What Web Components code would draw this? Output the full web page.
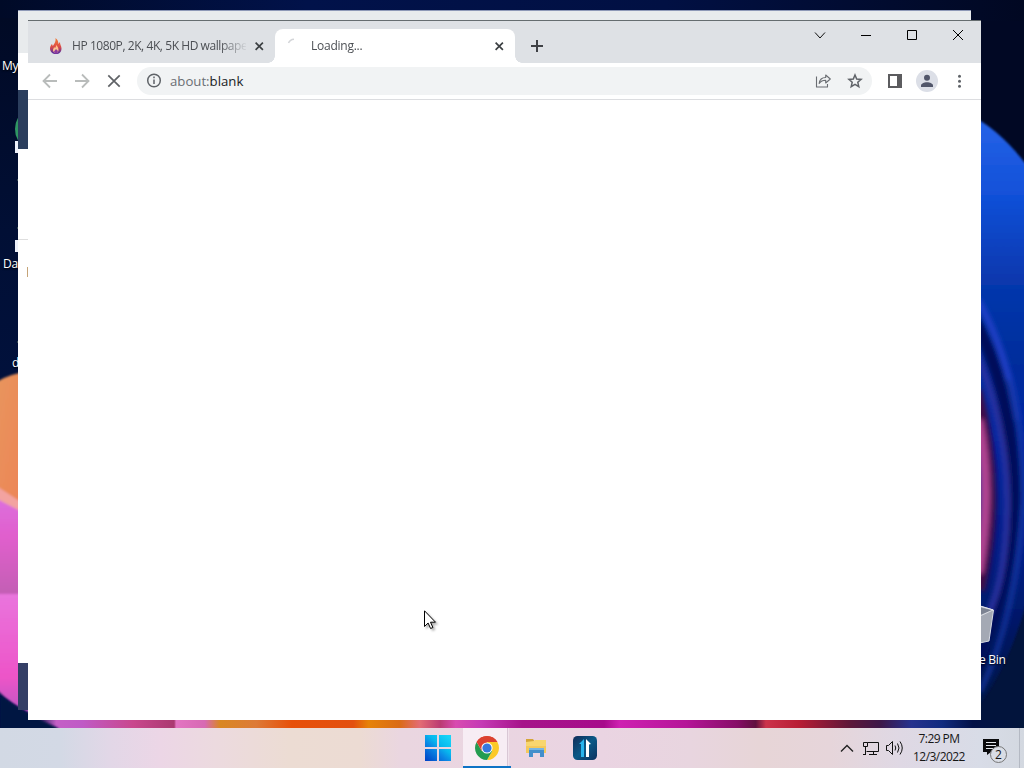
<!DOCTYPE html>
<html lang="en">
<head>
<meta charset="utf-8">
<title>Desktop</title>
<style>
  html, body {
    margin: 0;
    width: 1024px;
    height: 768px;
    overflow: hidden;
  }
  body {
    font-family: "Open Sans", "Noto Sans", sans-serif;
    font-size: 12px;
  }
</style>
</head>
<body>
<my-desktop>
  <desktop-label style="left: 2px; top: 58px">My</desktop-label>
  <desktop-label style="left: 3px; top: 256px">Dat</desktop-label>
  <desktop-label style="left: 12px; top: 355px">d</desktop-label>
  <desktop-label style="left: 979px; top: 652px">e Bin</desktop-label>
  <back-window></back-window>
  <browser-window>
    <browser-tab slot="tabs" id="wall">
      <svg slot="icon" width="16" height="16" viewBox="0 0 16 16">
        <defs><linearGradient id="f" x1="0" y1="0" x2="0" y2="1"><stop offset=".1" stop-color="#ee7638"/><stop offset=".55" stop-color="#dd4b45"/><stop offset=".9" stop-color="#64309a"/></linearGradient></defs>
        <path fill="url(#f)" d="M8.500 0c2.500 2 3 4 2.800 6l1.700-2c-.2 2.500 1.500 4 1.500 6.500 0 3.500-2 5.500-5.500 5.500s-6-2-6-5.500c0-2 1-3.500 2-4.500l.8 2c2-2.500 3.200-5 2.700-8z"/>
        <path fill="#ffc18d" d="M9 7c2 2 2.500 3 2.500 5s-1 3-2.500 3-3-1-3-3c0-1 1-2 1-3l1 1c1-1 1-2 1-3z"/>
        <path fill="#8b3aa0" d="M9 11l2 2-1 2.500H8l-1-2z"/>
      </svg>
      HP 1080P, 2K, 4K, 5K HD wallpapers
    </browser-tab>
    <browser-tab slot="tabs" active>
      <svg slot="icon" width="16" height="16" viewBox="0 0 16 16" fill="none" stroke="#d3d5d8" stroke-width="1.500"><path d="M1.500 5Q3 1.500 7 1.300"/></svg>
      Loading...
    </browser-tab>
    <browser-toolbar slot="toolbar"></browser-toolbar>
  </browser-window>
  <mouse-pointer></mouse-pointer>
  <task-bar slot="taskbar">
    <task-button>
      <svg width="26" height="26" viewBox="0 0 26 26">
        <defs><linearGradient id="w" gradientUnits="userSpaceOnUse" x1="0" y1="26" x2="22" y2="0"><stop offset="0" stop-color="#003fc4"/><stop offset=".45" stop-color="#0b8ae6"/><stop offset=".65" stop-color="#07b8ee"/><stop offset="1" stop-color="#18d4f7"/></linearGradient></defs>
        <path fill="url(#w)" d="M0 0h12v12H0zM14 0h12v12H14zM0 14h12v12H0zM14 14h12v12H14z"/>
      </svg>
    </task-button>
    <task-button active>
      <svg width="24" height="24" viewBox="0 0 24 24">
        <path fill="#dc4130" d="M12 12L1.610 6A12 12 0 0 1 22.390 6z"/>
        <path fill="#fbc929" d="M12 12V6h10.390A12 12 0 0 1 12 24l5.200-9z"/>
        <path fill="#249c50" d="M12 12l5.200 3L12 24A12 12 0 0 1 1.610 6l5.200 9z"/>
        <path fill="#dc4130" d="M12 6h10.390A12 12 0 0 0 1.610 6L6.800 15z"/>
        <circle cx="12" cy="12" r="5.600" fill="#fff"/><circle cx="12" cy="12" r="4.600" fill="#3778dc"/>
      </svg>
    </task-button>
    <task-button>
      <svg width="22" height="20" viewBox="0 0 22 20">
        <path fill="#d5a637" d="M1 1h7l2 3H1z"/><path fill="#f8d66f" d="M1 4l8-1 1-1h11v13H1z"/>
        <path fill="#f4c95c" d="M1 8h20v7H1z"/><path fill="#438fcb" d="M4 10h15v9h-4v-4H8v4H4z"/><path fill="#77b6e4" d="M4 10h15v2H4z"/>
      </svg>
    </task-button>
    <task-button>
      <svg width="24" height="24" viewBox="0 0 24 24">
        <defs><linearGradient id="t" x1="0" y1="0" x2="1" y2="1"><stop offset="0" stop-color="#102c58"/><stop offset=".5" stop-color="#0a5886"/><stop offset="1" stop-color="#0b315f"/></linearGradient></defs>
        <rect width="24" height="24" rx="4.500" fill="url(#t)"/>
        <path fill="#28b4ed" d="M6 8l5-5v18H8V8z"/><path fill="#fff" d="M13 3l5 5-2 .5V21h-3z"/>
      </svg>
    </task-button>
    <system-tray slot="tray"></system-tray>
  </task-bar>
</my-desktop>

<script>
/**
 * Attaches an open shadow root with the given markup.
 *
 * @param {HTMLElement} host - The element.
 * @param {string} html - Markup and styles.
 * @returns {ShadowRoot} The shadow root.
 */
const render = (host, html) => {
  const template = document.createElement('template')
  template.innerHTML = html
  const root = host.attachShadow({ mode: 'open' })
  root.appendChild(template.content.cloneNode(true))
  return root
}

/**
 * The wallpaper, the free area for the windows and the taskbar below.
 */
customElements.define('my-desktop', class extends HTMLElement {
  constructor () {
    super()
    render(this, `
<style>
  :host { display: flex; flex-direction: column; position: relative; width: 1024px; height: 768px; overflow: hidden; background: #010b29; }
  #wall { position: absolute; left: 0; top: 0; }
  #area { position: relative; flex: 1; overflow: hidden; }
</style>
<div id="area">
  <svg id="wall" width="1024" height="728" viewBox="0 0 1024 728">
    <defs>
      <filter id="b1" x="-20%" y="-20%" width="140%" height="140%"><feGaussianBlur stdDeviation="1"/></filter>
      <filter id="b2" x="-60%" y="-20%" width="220%" height="140%"><feGaussianBlur stdDeviation="2.500"/></filter>
      <linearGradient id="top" x1="0" x2="1"><stop offset="0" stop-color="#000a27"/><stop offset=".3" stop-color="#01124a"/><stop offset=".65" stop-color="#011043"/><stop offset="1" stop-color="#010822"/></linearGradient>
      <linearGradient id="left" x1="0" x2="0" y1="0" y2="1"><stop offset="0" stop-color="#010a25"/><stop offset=".3" stop-color="#010f35"/><stop offset="1" stop-color="#01154b"/></linearGradient>
      <linearGradient id="blue" x1="0" x2="0" y1="0" y2="1"><stop offset="0" stop-color="#2764e8"/><stop offset=".14" stop-color="#1150d8"/><stop offset=".28" stop-color="#0738ae"/><stop offset=".42" stop-color="#042d9c"/><stop offset=".55" stop-color="#0325a1"/><stop offset=".75" stop-color="#011d83"/><stop offset="1" stop-color="#021446"/></linearGradient>
      <linearGradient id="or" x1="0" x2="1" y1="0" y2="1"><stop offset="0" stop-color="#e8965c"/><stop offset="1" stop-color="#ee8057"/></linearGradient>
      <linearGradient id="pk" x1="0" x2="0" y1="0" y2="1"><stop offset="0" stop-color="#dc70dd"/><stop offset=".4" stop-color="#e15fcd"/><stop offset=".98" stop-color="#c45fb5"/></linearGradient>
      <linearGradient id="pk2" x1="0" x2="0" y1="0" y2="1"><stop offset="0" stop-color="#e975dd"/><stop offset=".7" stop-color="#ed54c8"/><stop offset="1" stop-color="#bd58c3"/></linearGradient>
      <linearGradient id="strip" gradientUnits="userSpaceOnUse" x1="0" x2="1024" y1="0" y2="0">
        <stop offset="0" stop-color="#021243"/><stop offset=".035" stop-color="#021243"/><stop offset=".055" stop-color="#c45fc6"/><stop offset=".08" stop-color="#bf5bc6"/><stop offset=".13" stop-color="#c9478d"/><stop offset=".17" stop-color="#aa3970"/><stop offset=".172" stop-color="#e374c2"/><stop offset=".2" stop-color="#d76ab3"/><stop offset=".215" stop-color="#d98722"/><stop offset=".25" stop-color="#dd7a37"/><stop offset=".285" stop-color="#e75009"/><stop offset=".345" stop-color="#e35010"/><stop offset=".36" stop-color="#e68208"/><stop offset=".39" stop-color="#da6b15"/><stop offset=".41" stop-color="#e36c75"/><stop offset=".43" stop-color="#bb3b72"/><stop offset=".445" stop-color="#d84bb0"/><stop offset=".47" stop-color="#c53ab5"/><stop offset=".51" stop-color="#a6148a"/><stop offset=".59" stop-color="#a70b8b"/><stop offset=".605" stop-color="#ce20b1"/><stop offset=".67" stop-color="#b51598"/><stop offset=".72" stop-color="#860d67"/><stop offset=".738" stop-color="#60103f"/><stop offset=".748" stop-color="#cc334b"/><stop offset=".78" stop-color="#b81e35"/><stop offset=".83" stop-color="#5d1739"/><stop offset=".86" stop-color="#3c1748"/><stop offset=".89" stop-color="#25318e"/><stop offset=".92" stop-color="#102b7f"/><stop offset=".95" stop-color="#021147"/><stop offset="1" stop-color="#02163b"/>
      </linearGradient>
    </defs>
    <rect width="1024" height="21" fill="url(#top)"/>
    <rect y="18" width="40" height="710" fill="url(#left)"/>
    <rect x="970" y="21" width="54" height="580" fill="#010824"/>
    <rect x="970" y="600" width="54" height="130" fill="#02143c"/>
    <g filter="url(#b1)">
      <path fill="url(#or)" d="M-5 383Q8 374 30 371V530H-5z"/>
      <path fill="#f3a3a0" d="M-5 485L30 508V520L-5 503z"/>
      <path fill="url(#pk)" d="M-5 498L30 516V594H-5z"/>
      <path fill="url(#pk2)" d="M-5 594H30V713Q10 704-5 688z"/>
    </g>
    <g filter="url(#b1)">
      <path fill="url(#blue)" d="M970 115Q1003 131 1034 175V570Q1018 650 982 702H970z"/>
    </g>
    <g filter="url(#b2)" fill="none">
      <path stroke="#02105a" stroke-width="13" d="M972 316Q1012 385 1014 490Q1012 590 972 670"/>
      <path stroke="#410e48" stroke-width="12" d="M976 390Q1003 490 979 590"/>
      <path stroke="#b04592" stroke-width="10" d="M978 420Q992 490 978 573"/>
      <path stroke="#2040c8" stroke-width="6" d="M978 300Q1006 350 1018 420"/>
      <path stroke="#2931a0" stroke-width="6" d="M975 350Q1009 430 1007 510T982 625"/>
      <path stroke="#1638a5" stroke-width="4" d="M1008 380Q1023 420 1024 500Q1017 615 980 692"/>
    </g>
    <path fill="#a4a9b4" stroke="#d8dbe3" d="M970 603L993.500 610 989 641 970 645z"/>
    <path fill="#7c8392" d="M972 606L992 610 980 615z"/>
    <path fill="none" stroke="#e7e8ec" stroke-width=".8" d="M980 606l13 4-13 6"/>
    <rect y="720" width="1024" height="8" fill="url(#strip)"/>
    <g filter="url(#b1)"><path fill="#021243" d="M0 696L28 714 58 728V730H0z"/></g>
    <ellipse cx="24" cy="129" rx="9" ry="15" fill="#2f9663"/>
    <path fill="#eef1fa" d="M15 141h4v12h-4zM15 240h4v12h-4z"/>
    <path fill="#33474e" d="M17 179h1v2h-1zM17 227h1v2h-1zM17 341h1v2h-1z"/>
  </svg>
  <slot></slot>
</div>
<slot name="taskbar"></slot>
`)
  }
})

customElements.define('desktop-label', class extends HTMLElement {
  constructor () {
    super()
    render(this, `
<style>
  :host { display: block; position: absolute; font-size: 12px; letter-spacing: -0.3px; line-height: 16px; color: #fff; white-space: nowrap; text-shadow: 0 1px 2px #000; }
</style>
<slot></slot>
`)
  }
})

/**
 * The window behind the browser, only its edges are seen.
 */
customElements.define('back-window', class extends HTMLElement {
  constructor () {
    super()
    render(this, `
<style>
  :host { display: flex; flex-direction: column; position: absolute; left: 18px; top: 10px; width: 953px; height: 700px; background: #fff; }
  .title { height: 43px; background: #e8ebed; border-top: 1px solid #8e99b7; box-sizing: border-box; }
  .bar { height: 37px; }
  .head { height: 59px; background: #2b3e5d; }
  .page { flex: 1; }
  .line { height: 90px; border-bottom: 1px solid #dedede; }
  .mark { width: 1px; height: 10px; margin: 27px 0 0 9px; background: #c5a478; }
  .foot { height: 47px; background: #343f66; }
</style>
<div class="title"></div>
<div class="bar"></div>
<div class="head"></div>
<div class="page"><div class="line"></div><div class="mark"></div></div>
<div class="foot"></div>
`)
  }
})

/**
 * The browser window with its tab strip, toolbar and empty page.
 */
customElements.define('browser-window', class extends HTMLElement {
  constructor () {
    super()
    render(this, `
<style>
  :host { display: flex; flex-direction: column; position: absolute; left: 28px; top: 20px; width: 953px; height: 700px; background: #fff; }
  header { display: flex; box-sizing: border-box; height: 43px; padding-left: 7px; border-top: 1px solid #666d70; background: #dee1e5; }
  .tabs { display: flex; align-items: flex-end; }
  .plus { width: 44px; display: flex; align-items: center; justify-content: center; padding-top: 7px; height: 36px; }
  .buttons { display: flex; margin-left: auto; height: 29px; }
  .buttons svg { width: 46px; height: 29px; }
</style>
<header>
  <div class="tabs"><slot name="tabs"></slot></div>
  <div class="plus"><svg width="12" height="12" viewBox="0 0 12 12"><path d="M6 0v12M0 6h12" stroke="#3f4145" stroke-width="2"/></svg></div>
  <div class="buttons">
    <svg viewBox="0 0 46 29" fill="none" stroke="#111"><path d="M18 11.500l5 5.500 5-5.500"/></svg>
    <svg viewBox="0 0 46 29" fill="none" stroke="#000"><path d="M18 14.500h10"/></svg>
    <svg viewBox="0 0 46 29" fill="none" stroke="#000"><path d="M18.500 9.500h9v9h-9z"/></svg>
    <svg viewBox="0 0 46 29" fill="none" stroke="#000"><path d="M18 9l10 10M28 9l-10 10"/></svg>
  </div>
</header>
<slot name="toolbar"></slot>
`)
  }
})

customElements.define('browser-tab', class extends HTMLElement {
  constructor () {
    super()
    render(this, `
<style>
  :host { display: flex; align-items: center; position: relative; box-sizing: border-box; width: 240px; height: 34px; padding: 0 10px 0 12px; border-radius: 8px 8px 0 0; color: #4c4f54; font-size: 12px; letter-spacing: -0.43px; }
  :host([active]) { background: #fff; letter-spacing: -0.25px; }
  :host([active])::before, :host([active])::after { content: ""; position: absolute; bottom: 0; width: 7px; height: 7px; }
  :host([active])::before { left: -7px; background: radial-gradient(circle at 0 0, transparent 6.500px, #fff 7px); }
  :host([active])::after { right: -7px; background: radial-gradient(circle at 100% 0, transparent 6.500px, #fff 7px); }
  ::slotted(svg) { display: block; }
  .title { width: 174px; margin-left: 8px; padding-bottom: 2px; overflow: hidden; white-space: nowrap; -webkit-mask-image: linear-gradient(90deg, #000 148px, transparent 176px); mask-image: linear-gradient(90deg, #000 148px, transparent 176px); }
  :host(:not([active])) .title { margin-left: 9px; }
  .close { margin-left: auto; padding-right: 1px; }
</style>
<slot name="icon"></slot>
<span class="title"><slot></slot></span>
<svg class="close" width="9" height="9" viewBox="0 0 9 9"><path d="M.6.600l7.300 7.300M7.900.600L.6 7.900" stroke="#3c4043" stroke-width="1.700"/></svg>
`)
  }
})

customElements.define('browser-toolbar', class extends HTMLElement {
  constructor () {
    super()
    render(this, `
<style>
  :host { display: flex; align-items: center; box-sizing: border-box; height: 37px; padding: 0 6px; border-bottom: 1px solid #dcdde0; background: #fff; }
  svg { display: block; flex: none; }
  .nav { display: flex; }
  .box { display: flex; align-items: center; width: 735px; height: 28px; margin: 0 7px; border-radius: 14px; background: #f1f3f4; box-sizing: border-box; padding-right: 1px; }
  .url { margin-left: 0; font-size: 13.2px; line-height: 26px; color: #202124; white-space: nowrap; }
  .url span { color: #6a6e73; }
  .share { margin-left: auto; }
  .end { display: flex; }
</style>
<div class="nav">
  <svg width="32" height="32" viewBox="0 0 32 32" fill="none" stroke="#b9bcbb" stroke-width="1.800"><path d="M23 16H10M16 9.500L9.500 16l6.500 6.500"/></svg>
  <svg width="32" height="32" viewBox="0 0 32 32" fill="none" stroke="#b9bcbb" stroke-width="1.800"><path d="M9 16h13M16 9.500l6.500 6.500-6.500 6.500"/></svg>
  <svg width="32" height="32" viewBox="0 0 32 32" fill="none" stroke="#5f6266" stroke-width="1.700"><path d="M10.300 10.300l11.400 11.400M21.700 10.300L10.300 21.700"/></svg>
</div>
<div class="box">
  <svg width="33" height="28" viewBox="0 0 33 28" fill="none" stroke="#5f6368" stroke-width="1.500"><circle cx="17" cy="13.500" r="6.300"/><path d="M17 12.500v4.500M17 9.600v1.600"/></svg>
  <div class="url"><span>about:</span>blank</div>
  <svg class="share" width="32" height="28" viewBox="0 0 32 28" fill="none" stroke="#6a6d72" stroke-width="1.100"><path d="M9.500 9.500v10.500h11v-3M12.200 16.500c.5-4.500 3-6 6.500-6V8l4.600 4-4.600 4v-2.700c-3 0-5 .9-6.500 3.200z" stroke-linejoin="round"/></svg>
  <svg width="32" height="28" viewBox="0 0 32 28" fill="none" stroke="#5f6368" stroke-width="1.500"><path d="M16 8l1.700 4 4.400.400-3.300 2.900 1 4.300-3.800-2.300-3.800 2.300 1-4.300-3.300-2.900 4.400-.4z"/></svg>
</div>
<div class="end">
  <svg width="32" height="32" viewBox="0 0 32 32"><path d="M9 9h14v14H9zM11 11v10h7V11z" fill="#5c5c5f" fill-rule="evenodd"/></svg>
  <svg width="32" height="32" viewBox="0 0 32 32"><circle cx="16" cy="16" r="11" fill="#dcdfe7"/><g fill="#51566a"><circle cx="16" cy="12.800" r="3"/><path d="M10 22v-1.500c0-2 3-3.300 6-3.300s6 1.300 6 3.300V22z"/></g></svg>
  <svg width="32" height="32" viewBox="0 0 32 32" fill="#5f6368"><circle cx="16.500" cy="11.200" r="1.500"/><circle cx="16.500" cy="16.200" r="1.500"/><circle cx="16.500" cy="21.200" r="1.500"/></svg>
</div>
`)
  }
})

customElements.define('mouse-pointer', class extends HTMLElement {
  constructor () {
    super()
    render(this, `
<style>
  :host { display: block; position: absolute; left: 424px; top: 610px; filter: drop-shadow(2px 2px 1px rgba(0, 0, 0, .3)); }
  svg { display: block; }
</style>
<svg width="13" height="20" viewBox="0 0 13 20"><path fill="#fff" stroke="#000" d="M.5.800v15.700l3.600-3.500 2.500 5.500 2.300-1-2.400-5.300h5z"/></svg>
`)
  }
})

/**
 * The taskbar: app buttons in the middle, the tray to the right.
 */
customElements.define('task-bar', class extends HTMLElement {
  constructor () {
    super()
    render(this, `
<style>
  :host { display: flex; height: 40px; flex: none; position: relative; background: linear-gradient(90deg, #d2d9e4 0, #d3d9e5 60px, #e2d7e7 110px, #ecd6e6 160px, #ecdadf 215px, #ecdcd3 290px, #ecdbd3 360px, #ead6e0 400px, #ead4e2 600px, #e8d5df 690px, #e7d5d7 760px, #e6d5da 830px, #dfd8e4 900px, #d8dce7 980px, #d3d8e0 1024px); }
  .apps { display: flex; flex: 1; padding-left: 413px; }
</style>
<div class="apps"><slot></slot></div>
<slot name="tray"></slot>
`)
  }
})

customElements.define('task-button', class extends HTMLElement {
  constructor () {
    super()
    render(this, `
<style>
  :host { display: flex; align-items: center; justify-content: center; box-sizing: border-box; width: 49px; height: 40px; }
  :host(:first-child) { width: 50px; }
  :host([active]) { width: 48px; border-bottom: 2px solid #0e73c5; padding: 2px 0 0; background: linear-gradient(90deg, #f7edf4 44px, #d9c7d5 44px, #d9c7d5 45px, #f1e3ec 45px, #f1e3ec 46px, transparent 46px); }
</style>
<slot></slot>
`)
  }
})

customElements.define('system-tray', class extends HTMLElement {
  constructor () {
    super()
    render(this, `
<style>
  :host { display: flex; align-items: center; width: 189px; color: #161616; }
  svg { display: block; flex: none; }
  .clock { width: 60px; margin: 0 0 1px 2px; text-align: center; font-size: 12px; line-height: 18px; letter-spacing: -0.55px; white-space: nowrap; }
  .notes { display: flex; position: relative; margin-left: 13px; }
  .count { position: absolute; left: 8px; top: 12px; box-sizing: border-box; width: 17px; height: 17px; border: 1px solid #777; border-radius: 50%; background: #d9dde5; font-size: 12px; line-height: 15px; text-align: center; }
  .edge { width: 1px; height: 40px; margin-left: auto; margin-right: 4px; background: #b4b9c3; }
</style>
<svg width="24" height="40" viewBox="0 0 24 40" fill="none" stroke="#222" stroke-width="1.400"><path d="M6 23.500l6-6 6 6"/></svg>
<svg width="24" height="40" viewBox="0 0 24 40" fill="none" stroke="#111"><path d="M8.500 14.500h11v9H7.500M14.500 23.500v3M10 26.500h8M4.500 14.500h4v4h-4zM6.500 18.500v8M4 26.500h3"/></svg>
<svg width="24" height="40" viewBox="0 0 24 40" fill="none" stroke="#111"><path d="M3.500 17.500h2l4-4v13l-4-4h-2zM12 17.500q1.500 2.500 0 5M14.500 15.500q3 4.500 0 9M17 13.500q4.500 6.500 0 13"/></svg>
<div class="clock">7:29 PM<br>12/3/2022</div>
<div class="notes">
  <svg width="27" height="28" viewBox="0 0 27 28"><path fill="#0b0b0d" d="M1 5h16v13H9l-4 3v-3H1z"/><path stroke="#e3e6ec" d="M4 8.500h10M4 11.500h10M4 14.500h7"/></svg>
  <span class="count">2</span>
</div>
<div class="edge"></div>
`)
  }
})
</script>
</body>
</html>
